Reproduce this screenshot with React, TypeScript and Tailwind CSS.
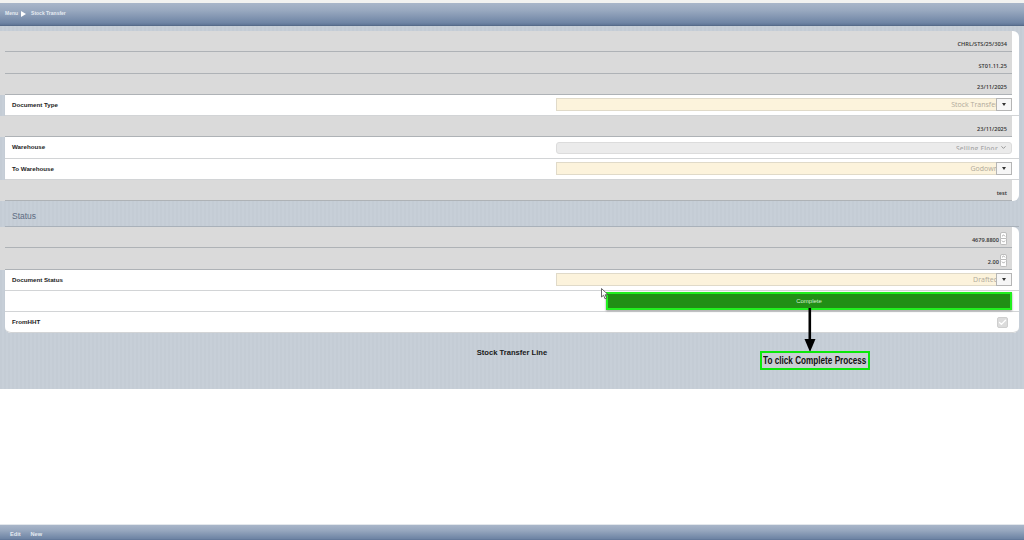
import React from 'react';
import { Check, ChevronDown, ChevronUp } from 'lucide-react';

const barGradient = 'bg-[linear-gradient(to_bottom,#a9b6c9_0%,#98a8bf_35%,#6f85a5_90%,#5f7596_100%)]';
const stripes = 'bg-[repeating-linear-gradient(to_right,#c4ccd5_0px,#c4ccd5_2px,#c7cfd8_2px,#c7cfd8_4px)]';

// Grey read-only row, runs out to the left edge of the page
const ReadOnlyRow = ({ children }: { children: React.ReactNode }) => (
  <div className="-ml-[5px] mr-[7px] h-[21.25px] bg-[#dadada] pl-[5px]">
    <div className="flex h-full items-end justify-end border-b border-[#aeb2b6] pb-[2px] text-[5.6px] font-semibold leading-[10px] text-[#333]">
      {children}
    </div>
  </div>
);

const TextValue = ({ value }: { value: string }) => <span className="pr-[5px] font-['Open_Sans',sans-serif]">{value}</span>;

const NumberValue = ({ value }: { value: string }) => (
  <div className="flex items-end pr-[5px] font-['Open_Sans',sans-serif]">
    <span>{value}</span>
    <div className="ml-px flex flex-col">
      <span className="flex h-[6.5px] w-[7px] items-center justify-center rounded-t-[2px] border border-[#bdbdbd] bg-white text-[#777]">
        <ChevronUp size={5} strokeWidth={3} className="shrink-0" />
      </span>
      <span className="flex h-[6.5px] w-[7px] items-center justify-center rounded-b-[2px] border border-t-0 border-[#bdbdbd] bg-white text-[#777]">
        <ChevronDown size={5} strokeWidth={3} className="shrink-0" />
      </span>
    </div>
  </div>
);

const FieldRow = ({ label, children, rounded }: { label?: string; children?: React.ReactNode; rounded?: boolean }) => (
  <div className={`flex h-[21.25px] items-center border-b border-[#d2d4d6] bg-white ${rounded ? 'rounded-b-[6px] border-[#aeb2b6]' : ''}`}>
    <span className="w-[551px] pl-[7px] text-[6.2px] font-bold leading-none text-[#1c1c1c]">{label}</span>
    <div className="flex flex-1 items-center pr-[7px]">{children}</div>
  </div>
);

// The arrow button sits over the end of the value, as in the app
const ComboBox = ({ value }: { value: string }) => (
  <div className="relative flex h-[13px] w-full items-center justify-end border border-[#e0dac9] bg-[#fcf3dc] pr-[13px] font-['Open_Sans',sans-serif]">
    <span className="whitespace-nowrap text-[7px] leading-none text-[#b0a99b]">{value}</span>
    <div className="absolute -right-px -top-px flex h-[13px] w-[16px] items-center justify-center border border-[#b5b5b5] bg-[#f6f6f6]">
      <span className="h-0 w-0 border-x-[2px] border-t-[3px] border-x-transparent border-t-[#333]" />
    </div>
  </div>
);

const DisabledCombo = ({ value }: { value: string }) => (
  <div className="mt-[1px] flex h-[12px] w-full items-center justify-end rounded-[3px] border border-[#dcdcdc] bg-[#ebebeb] pr-[4px] font-['Open_Sans',sans-serif]">
    <span className="h-[5px] overflow-hidden whitespace-nowrap text-[6.5px] font-semibold leading-[8px] tracking-[0.3px] text-[#a9a9a9]">{value}</span>
    <ChevronDown size={7} className="ml-[2px] shrink-0 text-[#8a8a8a]" strokeWidth={3} />
  </div>
);

export default function App() {
  return (
    <div className="relative flex h-[540px] w-[1024px] flex-col overflow-hidden bg-white font-['Liberation_Sans',sans-serif]">
      <div className="h-[3px] bg-[#f2f2f0]" />

      {/* Top bar */}
      <header className={`flex h-[23px] items-center border-b border-[#566b8a] pl-[5px] text-[5px] font-bold text-[#e6ebf2] ${barGradient}`}>
        <span>Menu</span>
        <span className="ml-[3px] h-0 w-0 border-y-[3px] border-l-[5px] border-y-transparent border-l-white" />
        <span className="ml-[5px]">Stock Transfer</span>
      </header>

      <main className={`flex h-[363px] flex-col px-[5px] pt-[5px] ${stripes}`}>
        <section className="rounded-[6px] bg-white">
          <ReadOnlyRow><TextValue value="CHRL/STS/25/3034" /></ReadOnlyRow>
          <ReadOnlyRow><TextValue value="ST01.11.25" /></ReadOnlyRow>
          <ReadOnlyRow><TextValue value="23/11/2025" /></ReadOnlyRow>
          <FieldRow label="Document Type"><ComboBox value="Stock Transfer" /></FieldRow>
          <ReadOnlyRow><TextValue value="23/11/2025" /></ReadOnlyRow>
          <FieldRow label="Warehouse"><DisabledCombo value="Selling Floor" /></FieldRow>
          <FieldRow label="To Warehouse"><ComboBox value="Godown" /></FieldRow>
          <ReadOnlyRow><TextValue value="test" /></ReadOnlyRow>
        </section>

        <div className="flex h-[26px] items-center border-b border-[#a9b1ba] pl-[7px] pt-[5px] text-[8.5px] text-[#5c6b82]">Status</div>

        <section className="rounded-[6px] bg-white">
          <ReadOnlyRow><NumberValue value="4679.8800" /></ReadOnlyRow>
          <ReadOnlyRow><NumberValue value="2.00" /></ReadOnlyRow>
          <FieldRow label="Document Status"><ComboBox value="Drafted" /></FieldRow>
          <div className="flex h-[21.25px] items-center justify-end border-b border-[#d2d4d6] bg-white pr-[7px]">
            <button className="flex h-[18px] w-[406px] items-center justify-center border-2 border-[#22f01f] bg-[#218f15] text-[6px] leading-none text-[#d7ecd5] shadow-[0_1px_2px_#999]">
              Complete
            </button>
          </div>
          <FieldRow label="FromHHT" rounded>
            <div className="ml-auto mr-[4px] flex h-[11px] w-[11px] items-center justify-center rounded-[2px] border border-[#cfcfcf] bg-[#dcdcdc] text-white">
              <Check size={9} strokeWidth={3.5} className="shrink-0" />
            </div>
          </FieldRow>
        </section>

        <div className="flex flex-1 justify-center pt-[15px] text-[7.6px] font-bold leading-[10px] text-[#1a1a1a]">Stock Transfer Line</div>
      </main>

      <div className="flex-1" />

      {/* Bottom bar */}
      <footer className={`flex h-[16px] items-end gap-[10px] border-t border-[#e3e7ec] pb-[2px] pl-[10px] text-[5.6px] font-bold leading-none text-[#e6ebf2] ${barGradient}`}>
        <span>Edit</span>
        <span>New</span>
      </footer>

      {/* Annotation overlay */}
      <svg className="absolute left-[802px] top-[308px]" width="16" height="44" viewBox="0 0 16 44">
        <path d="M7.8 0V32" stroke="#000" strokeWidth="2.6" fill="none" />
        <path d="M2.5 31H13.5L8 44Z" fill="#000" />
      </svg>
      <div className="absolute left-[760px] top-[351px] flex h-[19px] w-[110px] items-center justify-center border-2 border-[#0ae80a] bg-[#c9ced4] text-[11.5px] font-bold leading-none text-[#111]">
        <span className="scale-x-[0.71] whitespace-nowrap">To click Complete Process</span>
      </div>
      <svg className="absolute left-[601px] top-[288px]" width="8" height="12" viewBox="0 0 8 12">
        <path d="M.5.5V9L2.6 7.2 4 10.8 5.6 10.1 4.2 6.7H7Z" fill="#fff" stroke="#444" strokeWidth=".8" />
      </svg>
    </div>
  );
}
